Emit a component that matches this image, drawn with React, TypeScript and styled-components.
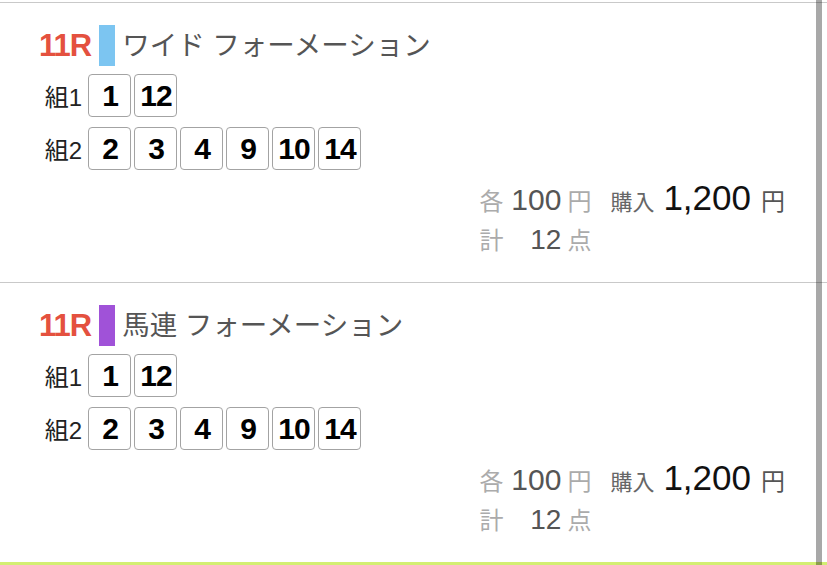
import React from 'react';
import styled, { createGlobalStyle } from 'styled-components';

const GlobalStyle = createGlobalStyle`
  html,
  body {
    margin: 0;
    padding: 0;
    background: #fff;
    font-family: 'Liberation Sans', 'Noto Sans CJK JP', sans-serif;
  }
`;

const Screen = styled.div`
  position: relative;
  width: 827px;
  height: 565px;
  overflow: hidden;
  background: #fff;
`;

const TicketList = styled.div`
  display: flex;
  flex-direction: column;
  padding-top: 2px;
`;

const Ticket = styled.div<{ $accent?: string }>`
  box-sizing: border-box;
  height: 280px;
  flex-shrink: 0;
  display: flex;
  flex-direction: column;
  border-top: ${(p) => (p.$accent ? `3px solid ${p.$accent}` : '1px solid #c9c9c9')};
  padding: 22px 0 0 40px;
`;

const Header = styled.div`
  display: flex;
  align-items: center;
  height: 41px;
`;

const RaceNo = styled.span`
  font-size: 31px;
  font-weight: bold;
  color: #e4513f;
  letter-spacing: -1px;
  line-height: 41px;
  margin-left: -1px;
`;

const TypeMark = styled.span<{ $color: string }>`
  width: 16px;
  height: 41px;
  margin: 0 7px 0 8px;
  background: ${(p) => p.$color};
`;

const BetType = styled.span`
  font-size: 27.5px;
  color: #555;
  line-height: 41px;
  white-space: pre;
`;

const Groups = styled.div`
  display: flex;
  flex-direction: column;
  gap: 10px;
  margin-top: 8px;
`;

const GroupRow = styled.div`
  display: flex;
  align-items: center;
`;

const GroupLabel = styled.span`
  width: 42px;
  margin-right: 6px;
  text-align: right;
  font-size: 24px;
  color: #222;
`;

const NumBox = styled.span`
  box-sizing: border-box;
  width: 43px;
  height: 43px;
  margin-right: 3px;
  padding-left: 1px;
  display: flex;
  align-items: center;
  justify-content: center;
  border: 1px solid #a3a3a3;
  border-radius: 4px;
  font-size: 30px;
  font-weight: bold;
  color: #000;
  letter-spacing: -1px;
`;

const Summary = styled.div`
  align-self: flex-end;
  margin: 9px 42px 0 0;
  display: grid;
  grid-template-columns: 24px 58px 30px auto auto auto;
  grid-auto-rows: 42px;
  align-items: baseline;
`;

const Cell = styled.span<{ $size: number; $color: string; $pad?: number; $right?: boolean }>`
  font-size: ${(p) => p.$size}px;
  color: ${(p) => p.$color};
  padding-left: ${(p) => p.$pad ?? 0}px;
  text-align: ${(p) => (p.$right ? 'right' : 'left')};
  line-height: 38px;
  white-space: nowrap;
`;

const ScrollBar = styled.div`
  position: absolute;
  top: 0;
  bottom: 0;
  right: 5px;
  width: 6px;
  background: rgba(0, 0, 0, 0.34);
`;

type TicketData = {
  race: string;
  type: string;
  color: string;
  groups: number[][];
  unit: string;
  total: string;
  count: number;
};

const tickets: TicketData[] = [
  {
    race: '11R',
    type: 'ワイド フォーメーション',
    color: '#7cc5f1',
    groups: [
      [1, 12],
      [2, 3, 4, 9, 10, 14],
    ],
    unit: '100',
    total: '1,200',
    count: 12,
  },
  {
    race: '11R',
    type: '馬連 フォーメーション',
    color: '#a052d8',
    groups: [
      [1, 12],
      [2, 3, 4, 9, 10, 14],
    ],
    unit: '100',
    total: '1,200',
    count: 12,
  },
];

const TicketCard: React.FC<{ t: TicketData }> = ({ t }) => (
  <Ticket>
    <Header>
      <RaceNo>{t.race}</RaceNo>
      <TypeMark $color={t.color} />
      <BetType>{t.type}</BetType>
    </Header>
    <Groups>
      {t.groups.map((g, i) => (
        <GroupRow key={i}>
          <GroupLabel>組{i + 1}</GroupLabel>
          {g.map((n) => (
            <NumBox key={n}>{n}</NumBox>
          ))}
        </GroupRow>
      ))}
    </Groups>
    <Summary>
      <Cell $size={24} $color="#ababab">各</Cell>
      <Cell $size={30} $color="#555" $right>
        {t.unit}
      </Cell>
      <Cell $size={24} $color="#ababab" $pad={6}>
        円
      </Cell>
      <Cell $size={22} $color="#666" $pad={19}>
        購入
      </Cell>
      <Cell $size={35} $color="#111" $pad={9}>
        {t.total}
      </Cell>
      <Cell $size={24} $color="#555" $pad={10}>
        円
      </Cell>
      <Cell $size={24} $color="#ababab">計</Cell>
      <Cell $size={28} $color="#555" $right>
        {t.count}
      </Cell>
      <Cell $size={24} $color="#ababab" $pad={6}>
        点
      </Cell>
    </Summary>
  </Ticket>
);

export default function App() {
  return (
    <Screen>
      <GlobalStyle />
      <TicketList>
        {tickets.map((t, i) => (
          <TicketCard key={i} t={t} />
        ))}
        <Ticket $accent="#d3ee72" />
      </TicketList>
      <ScrollBar />
    </Screen>
  );
}
